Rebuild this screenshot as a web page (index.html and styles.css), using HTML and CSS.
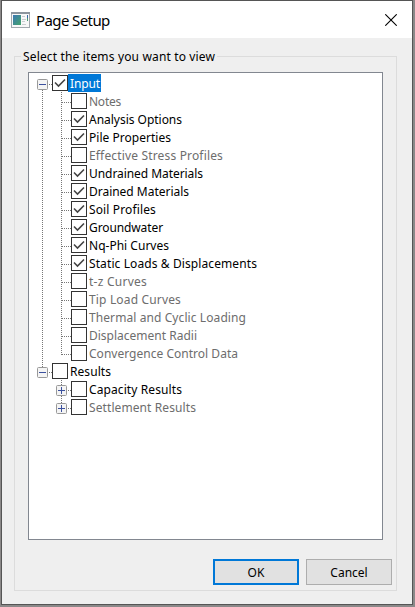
FILE: index.html
```
<!DOCTYPE html>
<html lang="en">
<head>
<meta charset="utf-8">
<title>Page Setup</title>
<link rel="stylesheet" href="styles.css">
</head>
<body>
<div class="window">
  <header class="titlebar">
    <svg class="app-icon" width="19" height="16" viewBox="0 0 19 16">
      <defs><linearGradient id="pic" x1="0" y1="0" x2="1" y2="1"><stop offset="0" stop-color="#3d78b4"/><stop offset="1" stop-color="#43a46a"/></linearGradient></defs>
      <rect x=".5" y=".5" width="18" height="15" fill="#f8f8f8" stroke="#a2a8ae"/>
      <path d="M0 1h19" stroke="#8d959e" stroke-width="2"/>
      <rect x="2" y="3" width="8" height="10" fill="url(#pic)"/>
      <path d="M11 4.5h3M11 7.5h4M11 9.5h3M11 12.5h4" stroke="#c9cdd0"/>
      <path d="M16.5 3v3" stroke="#3867a8"/><path d="M16.5 6v3" stroke="#4c9b72"/>
    </svg>
    <h1 class="title">Page Setup</h1>
    <svg class="close" width="12" height="12" viewBox="0 0 12 12"><path d="M.3 .3 11.7 11.7M11.7 .3 .3 11.7" stroke="#000" stroke-width="1.1"/></svg>
  </header>
  <main class="group">
    <div class="legend">Select the items you want to view</div>
    <div class="tree" id="tree"></div>
    <div class="buttons">
      <button class="btn primary">OK</button>
      <button class="btn">Cancel</button>
    </div>
  </main>
</div>
<script src="tree.js"></script>
</body>
</html>
```
FILE: styles.css
```
* { box-sizing: border-box; }
body {
  margin: 0;
  height: 607px;
  padding: 0 2px 2px 1px;
  background: #8b8989;
  font: 12px/18px "Noto Sans", sans-serif;
  color: #000;
  overflow: hidden;
}
.window {
  height: 605px;
  border: 1px solid #555;
  background: #efefef;
}
.titlebar {
  display: flex;
  align-items: center;
  height: 37px;
  padding: 0 15px 0 9px;
  background: #fff;
}
.title {
  flex: 1;
  margin: 1px 0 0 6px;
  font-size: 15px;
  font-weight: 400;
  line-height: 24px;
  letter-spacing: -.6px;
}
.group {
  margin: 18px 15px 0 12px;
  height: 535px;
  border: 1px solid #dcdcdc;
  padding: 0 4px 0 13px;
}
.legend {
  width: max-content;
  margin: -10px 0 0 -7px;
  padding: 0 2px;
  height: 18px;
  line-height: 20px;
  letter-spacing: .15px;
  background: #efefef;
}
.tree {
  width: 355px;
  height: 468px;
  margin-top: 7px;
  border: 1px solid #828790;
  background: #fff;
  padding: 1px 0 0 8px;
}
.row { display: flex; height: 18px; align-items: center; white-space: nowrap; }
.off { color: #6d6d6d; }
.lines { flex: none; display: block; }
.box { flex: none; }
.label { height: 18px; line-height: 20px; margin-left: 1px; padding: 0 1px; }
.selected { margin-left: 0; padding: 0 1px 0 2px; background: #0078d7; color: #fff; }
.buttons { display: flex; gap: 7px; justify-content: flex-end; margin-top: 19px; }
.btn {
  width: 86px;
  height: 26px;
  padding: 2px 0 0;
  border: 1px solid #adadad;
  background: #e1e1e1;
  font: inherit;
  color: #000;
}
.primary { border: 2px solid #0078d7; }
```
FILE: tree.js
```
// level, label, checked, greyed, expander ("-", "+" or none), label width
const items = [
  [0, "Input", 1, 0, "-", 30],
  [1, "Notes", 0, 1, "", 32],
  [1, "Analysis Options", 1, 0, "", 93],
  [1, "Pile Properties", 1, 0, "", 82],
  [1, "Effective Stress Profiles", 0, 1, "", 134],
  [1, "Undrained Materials", 1, 0, "", 114],
  [1, "Drained Materials", 1, 0, "", 100],
  [1, "Soil Profiles", 1, 0, "", 67],
  [1, "Groundwater", 1, 0, "", 74],
  [1, "Nq-Phi Curves", 1, 0, "", 80],
  [1, "Static Loads & Displacements", 1, 0, "", 168],
  [1, "t-z Curves", 0, 1, "", 58],
  [1, "Tip Load Curves", 0, 1, "", 92],
  [1, "Thermal and Cyclic Loading", 0, 1, "", 157],
  [1, "Displacement Radii", 0, 1, "", 108],
  [1, "Convergence Control Data", 0, 1, "", 149],
  [0, "Results", 0, 0, "-", 41],
  [1, "Capacity Results", 0, 0, "+", 93],
  [1, "Settlement Results", 0, 1, "+", 107]
];

const dots = d => `<path d="${d}" stroke="#777" stroke-dasharray="1 1" fill="none"/>`;
const expander = (x, sign) =>
  `<rect x="${x + .5}" y="5.5" width="10" height="10" rx="1" fill="#f4f4f4" stroke="#999"/>` +
  `<path d="M${x + 2} 10.5h7${sign === "+" ? `M${x + 5.5} 7v7` : ""}" stroke="#3c519e"/>`;

document.getElementById("tree").innerHTML = items.map(([level, text, on, off, sign], i) => {
  const width = level ? 34 : 15;
  let art = "";
  if (level) {
    if (i < 16) art += dots("M5.5 0V18");
    art += dots(i === 15 || i === 18 ? "M24.5 0V11" : "M24.5 0V18");
    art += dots("M25 10.5H34");
    if (sign) art += expander(19, sign);
  } else {
    art += dots(i === 0 ? "M5.5 16V18" : "M5.5 0V5") + dots("M12 10.5H15") + expander(0, sign);
  }
  const check = on ? '<path d="M3 7.5 6.5 11 13 4.5" fill="none" stroke="#444" stroke-width="1.6"/>' : "";
  return `<div class="row ${off ? "off" : ""}">
    <svg class="lines" width="${width}" height="18">${art}</svg>
    <svg class="box" width="16" height="16"><rect x=".5" y=".5" width="15" height="15" fill="#fff" stroke="#333"/>${check}</svg>
    <span class="label ${i === 0 ? "selected" : ""}">${text.replace("&", "&amp;")}</span></div>`;
}).join("");

// Keep every label at its nominal width by spreading the difference over its letters.
document.querySelectorAll(".label").forEach((el, i) => {
  const style = getComputedStyle(el);
  const natural = el.getBoundingClientRect().width - parseFloat(style.paddingLeft) - parseFloat(style.paddingRight);
  el.style.letterSpacing = (items[i][5] - natural) / items[i][1].length + "px";
});
```
